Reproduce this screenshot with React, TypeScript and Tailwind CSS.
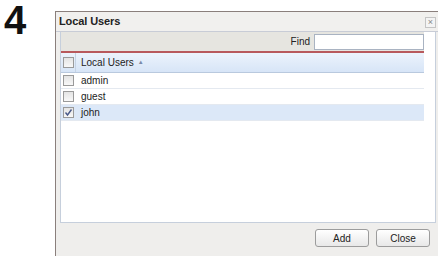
import React from 'react';

const users = [
  { name: 'admin', checked: false },
  { name: 'guest', checked: false },
  { name: 'john', checked: true },
];

function Check({ checked }: { checked: boolean }) {
  return (
    <div className="w-[11px] h-[11px] border border-[#9a9a9a] bg-gradient-to-b from-[#e4e4e4] to-[#f8f8f8] flex items-center justify-center">
      {checked && (
        <svg width="9" height="9" viewBox="0 0 9 9">
          <path d="M1.5 4.5 L3.5 7 L7.5 1.5" fill="none" stroke="#4a5a8a" strokeWidth="1.4" />
        </svg>
      )}
    </div>
  );
}

export default function App() {
  return (
    <div className="w-[440px] h-[256px] bg-white flex overflow-hidden font-['Liberation_Sans',Arial,sans-serif]">
      <div className="w-[55px] pl-[4px] text-[40px] leading-[40px] font-bold text-[#111]">4</div>

      {/* Dialog */}
      <div className="mt-[11px] w-[383px] h-[260px] border-l border-t border-[#8a7f7c] bg-[#efeeec] flex flex-col">
        {/* Title bar */}
        <div className="h-[20px] flex items-center justify-between pl-[3px] pr-[2px] bg-[#f1f0ee] border-b border-[#c8ccd6]">
          <span className="text-[11px] font-bold text-[#222] tracking-[-0.1px]">Local Users</span>
          <span className="w-[11px] h-[11px] mt-[1px] border border-[#c4c4c4] bg-[#f4f4f4] text-[9px] leading-[9px] text-[#888] flex items-center justify-center">×</span>
        </div>

        {/* Content */}
        <div className="flex-1 flex flex-col pl-[4px] pr-[2px]">
          <div className="h-[191px] border-l border-b border-r border-[#c6cfdc] bg-white flex flex-col pr-[11px]">
            {/* Toolbar */}
            <div className="h-[21px] bg-[#e6e5e0] border-b-2 border-[#b8595c] flex items-center justify-end gap-[4px]">
              <span className="text-[10px] text-[#222]">Find</span>
              <div className="w-[110px] h-[16px] border border-[#a9b3c2] bg-white" />
            </div>
            {/* Header */}
            <div className="h-[20px] flex items-center bg-gradient-to-b from-[#ecf3fc] to-[#d7e5f7] border-b border-[#b9c9de]">
              <div className="w-[15px] h-full flex items-center justify-center border-r border-[#c6d3e4]">
                <Check checked={false} />
              </div>
              <span className="pl-[5px] text-[10px] text-[#222]">Local Users</span>
              <span className="ml-[4px] text-[6px] text-[#7a8aa8]">▲</span>
            </div>
            {users.map((u) => (
              <div
                key={u.name}
                className={`h-[16px] flex items-center border-b border-[#e4e9f0] ${u.checked ? 'bg-[#dce8f8]' : 'bg-white'}`}
              >
                <div className="w-[15px] h-full flex items-center justify-center">
                  <Check checked={u.checked} />
                </div>
                <span className="pl-[5px] text-[10px] text-[#222]">{u.name}</span>
              </div>
            ))}
          </div>

          {/* Buttons */}
          <div className="mt-[6px] flex justify-end gap-[7px] pr-[6px]">
            <button className="w-[54px] h-[18px] rounded-[3px] border border-[#9c9c9c] bg-gradient-to-b from-white to-[#e8e8e8] text-[10px] text-[#222]">Add</button>
            <button className="w-[54px] h-[18px] rounded-[3px] border border-[#9c9c9c] bg-gradient-to-b from-white to-[#e8e8e8] text-[10px] text-[#222]">Close</button>
          </div>
        </div>
      </div>
    </div>
  );
}
